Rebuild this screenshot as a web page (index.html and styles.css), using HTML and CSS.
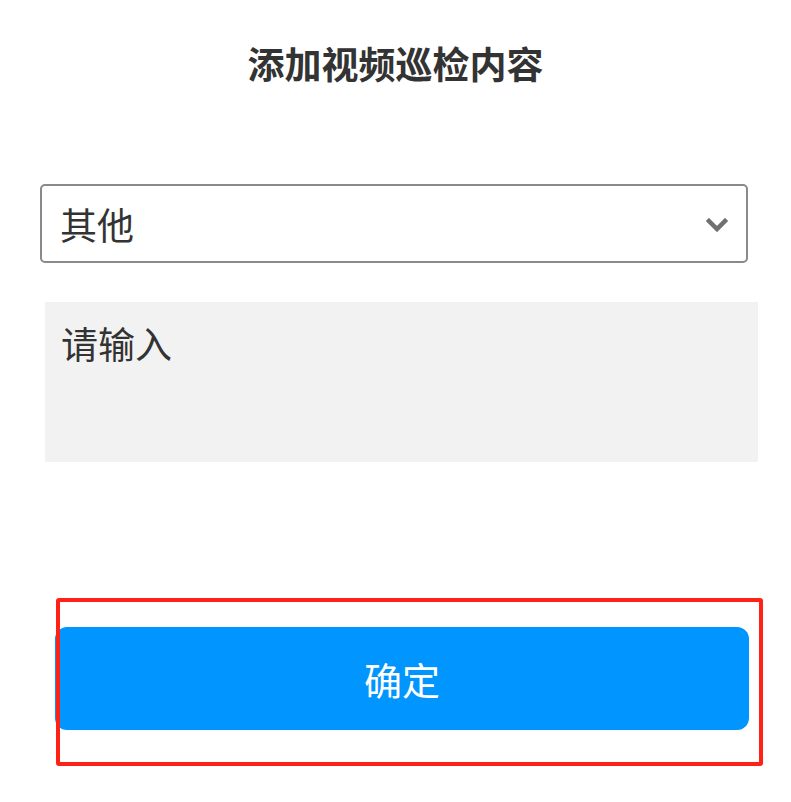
FILE: index.html
```html
<!DOCTYPE html>
<html lang="zh">
<head>
<meta charset="utf-8">
<link rel="stylesheet" href="styles.css">
</head>
<body>
<div class="page">
  <h1 class="title">添加视频巡检内容</h1>
  <div class="select">
    <span class="select-value">其他</span>
    <svg class="chevron" width="24" height="14" viewBox="0 0 24 14"><polyline points="3,3 11,11 19,3" fill="none" stroke="#707070" stroke-width="4.5" stroke-linecap="square"/></svg>
  </div>
  <div class="textarea"><span class="placeholder">请输入</span></div>
  <div class="btn-wrap">
    <button class="btn">确定</button>
    <div class="highlight"></div>
  </div>
</div>
</body>
</html>
```
FILE: styles.css
```css
html, body { margin: 0; padding: 0; background: #fff; }
body { font-family: "Noto Sans CJK SC", "Noto Sans", sans-serif; color: #333; }
.page { width: 791px; height: 802px; display: flex; flex-direction: column; }
.title { margin: 41px 0 0; font-size: 37px; line-height: 44px; font-weight: 700; text-align: center; color: #333; }
.select {
  margin: 99px 0 0 40px; width: 708px; height: 79px; box-sizing: border-box;
  border: 2px solid #8a8a8a; border-radius: 5px;
  display: flex; align-items: center; justify-content: space-between;
  padding: 0 16px 0 18px;
}
.select-value { font-size: 37px; line-height: 40px; color: #333; }
.chevron { display: block; margin-top: 2px; }
.textarea {
  margin: 39px 0 0 45px; width: 713px; height: 160px; background: #f2f2f2;
  box-sizing: border-box; padding: 21px 0 0 16px;
}
.placeholder { font-size: 37px; line-height: 40px; color: #333; display: block; }
.btn-wrap { position: relative; margin: 165px 0 0 55px; width: 694px; height: 103px; }
.btn {
  display: block; width: 100%; height: 100%; border: 0; border-radius: 12px;
  background: #0095ff; color: #fff; font-family: inherit; font-size: 38px; padding: 0;
}
.highlight {
  position: absolute; left: 1px; top: -29px; width: 707px; height: 168px;
  box-sizing: border-box; border: 4px solid #ff2016; border-radius: 3px;
}
```
